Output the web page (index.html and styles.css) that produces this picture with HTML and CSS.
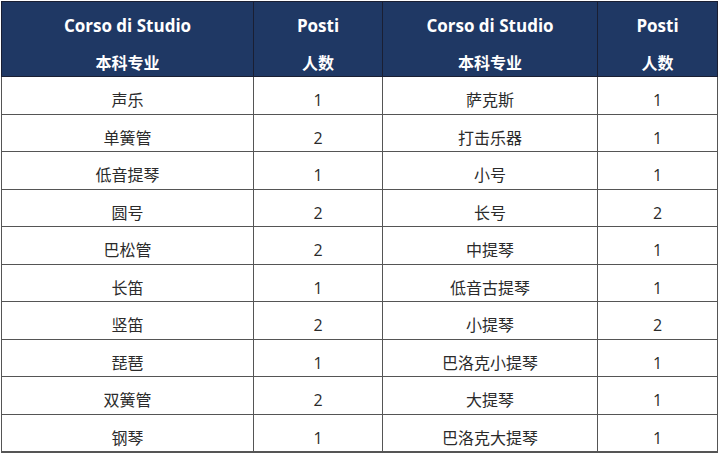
FILE: index.html
```html
<!DOCTYPE html>
<html>
<head>
<meta charset="utf-8">
<link rel="stylesheet" href="styles.css">
</head>
<body>
<table class="grid">
  <colgroup>
    <col class="c1"><col class="c2"><col class="c3"><col class="c4">
  </colgroup>
  <thead>
    <tr>
      <th><div class="en">Corso di Studio</div><div class="zh">本科专业</div></th>
      <th><div class="en">Posti</div><div class="zh">人数</div></th>
      <th><div class="en">Corso di Studio</div><div class="zh">本科专业</div></th>
      <th><div class="en">Posti</div><div class="zh">人数</div></th>
    </tr>
  </thead>
  <tbody>
    <tr><td>声乐</td><td>1</td><td>萨克斯</td><td>1</td></tr>
    <tr><td>单簧管</td><td>2</td><td>打击乐器</td><td>1</td></tr>
    <tr><td>低音提琴</td><td>1</td><td>小号</td><td>1</td></tr>
    <tr><td>圆号</td><td>2</td><td>长号</td><td>2</td></tr>
    <tr><td>巴松管</td><td>2</td><td>中提琴</td><td>1</td></tr>
    <tr><td>长笛</td><td>1</td><td>低音古提琴</td><td>1</td></tr>
    <tr><td>竖笛</td><td>2</td><td>小提琴</td><td>2</td></tr>
    <tr><td>琵琶</td><td>1</td><td>巴洛克小提琴</td><td>1</td></tr>
    <tr><td>双簧管</td><td>2</td><td>大提琴</td><td>1</td></tr>
    <tr><td>钢琴</td><td>1</td><td>巴洛克大提琴</td><td>1</td></tr>
  </tbody>
</table>
</body>
</html>
```

FILE: styles.css
```css
html, body {
  margin: 0;
  padding: 0;
  background: #ffffff;
}
body {
  padding: 1px 0 0 1px;
  font-family: "Open Sans", "Noto Sans CJK SC", sans-serif;
}
.grid {
  border-collapse: collapse;
  table-layout: fixed;
  width: 716px;
}
.c1 { width: 252px; }
.c2 { width: 129px; }
.c3 { width: 215px; }
.c4 { width: 120px; }
.grid thead tr {
  height: 75px;
}
.grid th {
  background: #1f3864;
  color: #ffffff;
  font-weight: 700;
  font-size: 16px;
  padding: 5px 0 0 0;
  border: 1px solid #1a1f33;
  text-align: center;
  vertical-align: top;
}
.grid th .en {
  line-height: 38px;
  font-size: 17px;
}
.grid th .zh {
  line-height: 35px;
  margin-bottom: -5px;
  font-family: "Noto Sans CJK SC", sans-serif;
}
.grid tbody tr {
  height: 37.5px;
}
.grid td {
  border: 1px solid #555555;
  padding: 10px 0 0 0;
  line-height: 22px;
  text-align: center;
  vertical-align: middle;
  font-size: 16px;
  color: #2b2b2b;
  font-family: "Open Sans", "Noto Sans CJK SC", sans-serif;
}
.grid tbody tr:last-child td {
  border-bottom: 2px solid #555555;
}
```
